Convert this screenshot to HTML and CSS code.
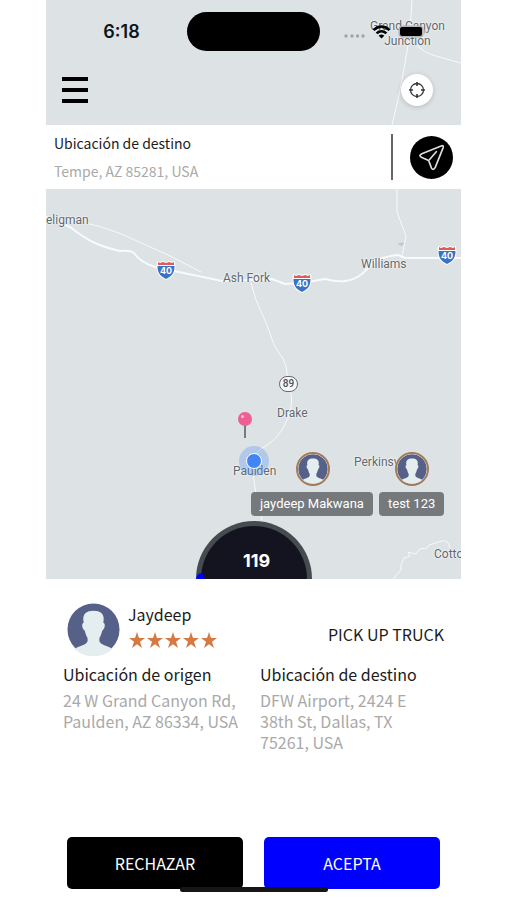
FILE: index.html
```html
<!DOCTYPE html>
<html lang="es">
<head>
<meta charset="utf-8">
<meta name="viewport" content="width=device-width, initial-scale=1">
<title>Solicitud de viaje</title>
<link rel="stylesheet" href="styles.css">
</head>
<body>
<svg class="defs" aria-hidden="true">
  <symbol id="person" viewBox="0 0 54 54">
    <circle cx="27" cy="27" r="26.500" fill="#56618a"/>
    <path fill="#e4eeef" d="M17 20C15 11 20 8 27 8s12 3 10 12c3 1 1 7-1 8-1 4-2 6-3 8v3c2 5 9 4 13 8-5 5-12 7-19 7S13 52 8 47c4-4 11-3 13-8v-3c-1-2-2-4-3-8-2-1-4-7-1-8z"/>
  </symbol>
  <symbol id="shield" viewBox="0 0 20 20">
    <path fill="#fff" d="M1 1l3 1 3-1 3 1 3-1 3 1 3-1c1 8 1 15-9 19C0 16 0 9 1 1z"/>
    <path fill="#d95d5d" d="M2 2l2 1 3-1 3 1 3-1 3 1 2-1v3H2z"/>
    <path fill="#3c72c4" d="M1.500 6h17c0 6-2 10-8.500 13C3.500 16 1.500 12 1.500 6z"/>
  </symbol>
  <symbol id="star" viewBox="0 0 18 18">
    <path fill="#d57a42" d="M9 1l2 6h6l-5 3.700 2 6.300-5-3.800L4 17l2-6.300L1 7h6z"/>
  </symbol>
</svg>
<main class="screen">
  <section class="stage" aria-label="Mapa">
    <div class="map">
      <svg class="roads" viewBox="0 0 415 579" preserveAspectRatio="xMidYMid slice" fill="none" stroke="#f8fafb" stroke-linejoin="round" aria-hidden="true">
        <path stroke-width="2" d="M0 217L24 227Q38 238 49 243T74 251Q84 250 88 253Q94 262 109 267L176 281L226 279L239 284L256 283L279 279Q290 282 299 281T316 274L325 265Q332 257 352 255L359 258H415"/>
        <path stroke-width="1" d="M40 223Q65 229 82 237L122 255L155 272"/>
        <path stroke-width="1" d="M205 283Q209 300 216 314C224 330 226 343 231 350Q238 358 240 366L242 380Q247 396 245 407T236 430Q226 444 216 448Q206 456 207 472T216 520"/>
        <path stroke-width="1" d="M366 0Q365 25 362 45T353 95L346 125L351 190V212L360 236L356 256M371 46Q380 54 390 56L415 63"/>
        <path stroke-width="1" d="M347 579L355 570V565L358 558L364 556L362 552L370 554L374 549L381 548L383 545L396 541Q402 539 404 548"/>
        <path stroke="#a9bdd8" stroke-width="1" d="M352 244l6-1M354 245h3"/>
      </svg>
      <span class="place canyon">Grand Canyon<br>Junction</span>
      <span class="place seligman">eligman</span>
      <span class="place ashfork">Ash Fork</span>
      <span class="place williams">Williams</span>
      <span class="place drake">Drake</span>
      <span class="place paulden">Paulden</span>
      <span class="place perkins">Perkinsv</span>
      <span class="place cotton">Cotto</span>
      <span class="shield s1"><svg aria-hidden="true"><use href="#shield"/></svg><b>40</b></span>
      <span class="shield s2"><svg aria-hidden="true"><use href="#shield"/></svg><b>40</b></span>
      <span class="shield s3"><svg aria-hidden="true"><use href="#shield"/></svg><b>40</b></span>
      <span class="route">89</span>
      <svg class="pin" viewBox="0 0 16 28" aria-hidden="true">
        <path d="M8 13v14" stroke="#777b80" stroke-width="2"/>
        <circle cx="8" cy="8" r="7" fill="#ee5f94"/>
        <circle cx="5.500" cy="5.500" r="1.500" fill="#ffc0d6"/>
      </svg>
      <span class="here"></span>
      <svg class="driver d1" aria-hidden="true"><use href="#person"/></svg>
      <svg class="driver d2" aria-hidden="true"><use href="#person"/></svg>
      <span class="tag t1">jaydeep Makwana</span>
      <span class="tag t2">test 123</span>
      <div class="timer">
        <svg viewBox="0 0 118 59" aria-hidden="true">
          <circle cx="59" cy="59" r="58" fill="#454b4e"/>
          <circle cx="59" cy="59" r="53" fill="#141420"/>
          <path d="M1 59q1-6 6-6l3 6z" fill="#00f"/>
        </svg>
        <span class="seconds">119</span>
      </div>
    </div>
    <header class="overlay">
      <div class="status">
        <span class="clock">6:18</span>
        <span class="island"></span>
        <span class="signals">
          <svg class="dots" viewBox="0 0 21 4" fill="#a0a5a8" aria-hidden="true"><circle cx="2" cy="2" r="1.700"/><circle cx="8" cy="2" r="1.700"/><circle cx="13.500" cy="2" r="1.700"/><circle cx="19" cy="2" r="1.700"/></svg>
          <svg class="wifi" viewBox="0 0 20 15" fill="none" stroke="#000" stroke-width="2.800" aria-hidden="true"><path d="M1.500 5.500c5-5 12-5 17 0M4.800 9c3-3 7.400-3 10.400 0"/><path d="M7 11.500c2-1.700 4-1.700 6 0l-3 3z" fill="#000" stroke="none"/></svg>
          <svg class="battery" viewBox="0 0 28 13" aria-hidden="true"><rect x="1" y="1" width="24" height="11" rx="3" fill="#c0c4c6" stroke="#a5a9ab"/><rect x="2" y="2" width="22" height="9" rx="2"/><path d="M26 4q3 2 0 5z" fill="#a5a9ab"/></svg>
        </span>
      </div>
      <nav class="toolbar">
        <button class="menu" type="button" aria-label="Menú"><svg viewBox="0 0 26 26" aria-hidden="true"><path d="M0 2h26M0 13h26M0 24h26" stroke="#000" stroke-width="4"/></svg></button>
        <button class="locate" type="button" aria-label="Mi ubicación"><svg viewBox="0 0 18 18" fill="none" stroke="#34383a" aria-hidden="true"><circle cx="9" cy="9" r="6.500" stroke-width="1.300"/><path d="M9 1v4M9 13v4M1 9h4M13 9h4" stroke-width="1.600"/></svg></button>
      </nav>
      <div class="destination">
        <div class="where">
          <strong>Ubicación de destino</strong>
          <span>Tempe, AZ 85281, USA</span>
        </div>
        <button class="navigate" type="button" aria-label="Navegar"><svg viewBox="0 0 28 28" fill="none" stroke="#dedede" stroke-width="1.700" stroke-linejoin="round" stroke-linecap="round" aria-hidden="true"><path d="M24 2L4 10q-4 2 0 4l7 3 3 8q2 3 4-1l8-20q1-3-2-2zM12 16l7-8"/></svg></button>
      </div>
    </header>
  </section>
  <section class="sheet">
    <div class="rider">
      <svg class="avatar" aria-hidden="true"><use href="#person"/></svg>
      <div class="who">
        <span class="name">Jaydeep</span>
        <span class="stars" role="img" aria-label="5 estrellas"><svg><use href="#star"/></svg><svg><use href="#star"/></svg><svg><use href="#star"/></svg><svg><use href="#star"/></svg><svg><use href="#star"/></svg></span>
      </div>
      <span class="vehicle">PICK UP TRUCK</span>
    </div>
    <div class="trip">
      <div><h2>Ubicación de origen</h2><p>24 W Grand Canyon Rd, Paulden, AZ 86334, USA</p></div>
      <div><h2>Ubicación de destino</h2><p>DFW Airport, 2424 E 38th St, Dallas, TX 75261, USA</p></div>
    </div>
    <div class="actions">
      <button class="reject" type="button">RECHAZAR</button>
      <button class="accept" type="button">ACEPTA</button>
    </div>
    <span class="home"></span>
  </section>
</main>
</body>
</html>
```
FILE: styles.css
```css
* { box-sizing: border-box; }
body { margin: 0; background: #fff; color: #1c1c1c; font-family: "Noto Sans CJK SC", "Noto Sans", sans-serif; }
button { border: 0; padding: 0; font: inherit; display: grid; place-items: center; }
svg { display: block; }
.defs { position: absolute; width: 0; height: 0; }
.screen { min-height: 100vh; padding: 0 46px; display: flex; flex-direction: column; }
.stage { flex: 1; position: relative; overflow: hidden; background: #dde2e5; }
.map { position: absolute; inset: 0; overflow: hidden; font-family: Roboto, sans-serif; }
.roads { width: 100%; height: 100%; }
.overlay { position: relative; }

.place, .shield, .route, .pin, .here, .driver, .tag, .timer { position: absolute; }
.place { font-size: 12px; line-height: 15px; color: #62676a; text-align: center; white-space: nowrap; text-shadow: 0 0 2px #fff, 0 0 2px #fff; }
.canyon { left: 324px; top: 19px; }
.seligman { left: 0; top: 213px; }
.ashfork { left: 177px; top: 271px; }
.williams { left: 315px; top: 257px; }
.drake { left: 231px; top: 406px; }
.paulden { left: 187px; top: 464px; }
.perkins { left: 308px; top: 455px; }
.cotton { left: 388px; top: 547px; }
.shield { width: 20px; height: 20px; display: grid; }
.shield svg, .shield b { grid-area: 1 / 1; width: 20px; height: 20px; }
.shield b { color: #fff; font: 700 9px/21px Inter, sans-serif; text-align: center; }
.s1 { left: 110px; top: 260px; }
.s2 { left: 246px; top: 273px; }
.s3 { left: 391px; top: 245px; }
.route { left: 233px; top: 376px; width: 19px; height: 16px; border: 1px solid #666a6c; border-radius: 8px; background: #f4f6f7; color: #4c5052; font-size: 10px; font-weight: 500; line-height: 14px; text-align: center; }
.pin { left: 191px; top: 411px; width: 16px; height: 28px; }
.here { left: 193px; top: 446px; width: 30px; height: 30px; border-radius: 50%; background: rgba(66, 133, 244, .28); }
.here::after { content: ""; position: absolute; inset: 7px; border: 1px solid #fff; border-radius: 50%; background: #4285f4; }
.driver { width: 34px; height: 34px; border: 2px solid #a27b5b; border-radius: 50%; background: #fff; }
.d1 { left: 250px; top: 452px; }
.d2 { left: 349px; top: 452px; }
.tag { top: 492px; height: 24px; padding: 0 9px; border-radius: 4px; background: #75797b; color: #fff; font-size: 13px; line-height: 24px; white-space: nowrap; }
.t1 { left: 205px; }
.t2 { left: 333px; }
.timer { bottom: 0; left: 50%; width: 118px; height: 59px; margin-left: -59px; }
.seconds { position: absolute; left: 6px; right: 0; top: 30px; color: #fff; font: 700 18px/22px Inter, sans-serif; text-align: center; }

.status { height: 63px; display: grid; grid-template-columns: 1fr 133px 1fr; align-items: center; }
.clock { padding-left: 10px; text-align: center; color: #101417; font: 600 18px Inter, sans-serif; }
.island { height: 39px; border-radius: 20px; background: #000; }
.signals { display: flex; align-items: center; gap: 7px; padding-left: 24px; }
.dots { width: 21px; height: 4px; margin-top: 8px; }
.wifi { width: 19px; height: 14px; }
.battery { width: 28px; height: 13px; }
.toolbar { height: 62px; padding: 0 28px 8px 16px; display: flex; align-items: center; justify-content: space-between; }
.menu { background: none; }
.menu svg { width: 26px; height: 26px; }
.locate { width: 32px; height: 32px; border-radius: 50%; background: #fff; box-shadow: 0 1px 5px rgba(0, 0, 0, .18); }
.locate svg { width: 18px; height: 18px; }
.destination { height: 64px; padding: 8px; display: flex; align-items: center; justify-content: space-between; background: #fff; }
.where { flex: 1; height: 46px; margin-right: 17px; border-right: 2px solid #666; display: grid; align-content: center; gap: 4px; font-size: 14px; line-height: 24px; }
.where strong { font-weight: 400; }
.where span, .trip p { color: #a9a9a9; }
.navigate { width: 43px; height: 43px; border-radius: 50%; background: #000; }
.navigate svg { width: 27px; height: 27px; }

.sheet { position: relative; padding: 24px 15px 11px 17px; font-size: 16px; line-height: 21px; }
.rider { display: flex; align-items: center; padding: 0 2px 0 4px; }
.avatar { width: 53px; height: 53px; }
.who { display: grid; gap: 6px; margin: 0 0 6px 8px; flex: 1; }
.stars { display: flex; }
.stars svg { width: 18px; height: 18px; }
.vehicle { margin-top: 9px; }
.trip { display: grid; grid-template-columns: 1fr 1fr; gap: 11px; margin-top: 8px; }
.trip h2, .trip p { margin: 0; font-size: 16px; font-weight: 400; }
.trip h2 { margin-bottom: 5px; white-space: nowrap; }
.trip p { padding-right: 6px; }
.actions { display: grid; grid-template-columns: 1fr 1fr; gap: 21px; padding: 0 6px 0 4px; margin-top: 84px; }
.actions button { height: 52px; border-radius: 5px; color: #fff; }
.reject { background: #000; }
.accept { background: #00f; }
.home { position: absolute; bottom: 8px; left: 50%; width: 148px; height: 5px; margin-left: -74px; border-radius: 3px; background: #161616; }
```
